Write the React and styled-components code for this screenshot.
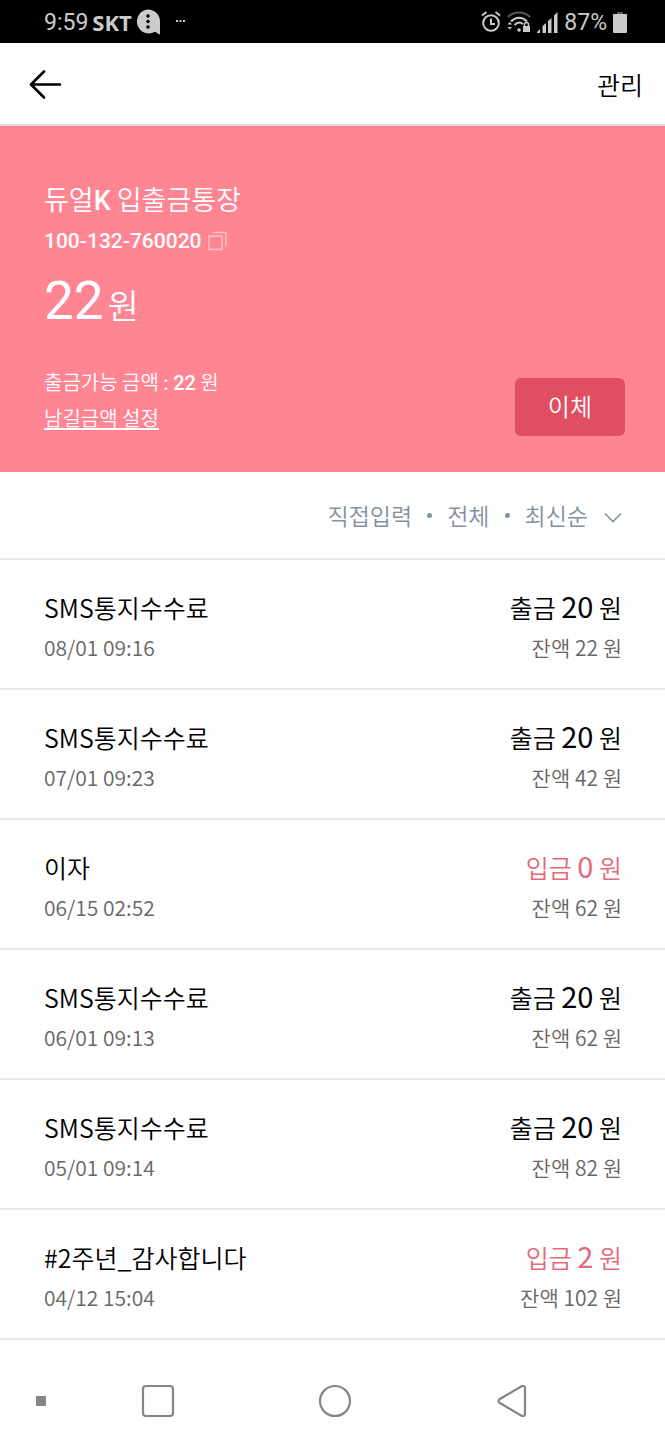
import styled, { createGlobalStyle } from "styled-components";

const GlobalStyle = createGlobalStyle`
    * {
        box-sizing: border-box;
    }
    body {
        margin: 0;
        background: #fefefe;
        color: #000;
        font-family: "Noto Sans CJK KR", "Noto Sans", sans-serif;
        font-weight: 350;
    }
    button {
        padding: 0;
        border: 0;
        background: none;
        color: inherit;
        font: inherit;
        cursor: pointer;
    }
    svg {
        display: block;
        flex-shrink: 0;
    }
`;

const Screen = styled.div`
    display: flex;
    flex-direction: column;
    min-height: 100vh;
`;

const StatusBar = styled.div`
    display: flex;
    align-items: center;
    justify-content: space-between;
    padding: 6px 38px 5px 44px;
    background: #000;
    color: #cbcbcb;
    font-family: Roboto, sans-serif;
    font-size: 23px;
    font-weight: 400;
    line-height: 32px;
`;

const StatusGroup = styled.div`
    display: flex;
    align-items: center;
    gap: ${({ $gap }) => $gap}px;
`;

const StatusText = styled.span`
    padding-top: 2px;
    line-height: 30px;
`;

const Carrier = styled.span`
    font-family: "Open Sans", sans-serif;
    font-size: 22px;
    font-weight: 700;
    line-height: 30px;
`;

const Header = styled.header`
    display: flex;
    align-items: center;
    justify-content: space-between;
    padding: 22px 22px 21px 28px;
    border-bottom: 2px solid #e4dcde;
`;

const HeaderButton = styled.button`
    font-size: 25px;
    line-height: 38px;
`;

const Account = styled.section`
    display: flex;
    align-items: flex-end;
    justify-content: space-between;
    padding: 53px 40px 36px 44px;
    background: #ff8593;
    color: #fff;
`;

const AccountName = styled.h1`
    margin: 0;
    font-size: 27px;
    font-weight: inherit;
    line-height: 40px;
`;

const Latin = styled.span`
    font-family: Roboto, sans-serif;
    font-weight: 500;
    line-height: 1;
`;

const AccountNumber = styled.div`
    display: flex;
    align-items: center;
    gap: 6px;
    font-family: Roboto, sans-serif;
    font-size: 21px;
    font-weight: 500;
    line-height: 44px;
`;

const Total = styled.p`
    margin: 6px 0 23px;
    font-size: 34px;
    line-height: 72px;
`;

const TotalNumber = styled.span`
    margin-right: 4px;
    font-family: Roboto, sans-serif;
    font-size: 53px;
    font-weight: 400;
    line-height: 1;
`;

const Available = styled.p`
    margin: 0;
    font-size: 20px;
    line-height: 36px;
`;

const TextLink = styled.a`
    display: block;
    color: inherit;
    font-size: 20px;
    line-height: 36px;
    text-underline-offset: 2px;
`;

const TransferButton = styled.button`
    padding: 9px 33px 11px;
    border-radius: 6px;
    background: #df4e61;
    font-size: 24px;
    line-height: 38px;
`;

const FilterBar = styled.div`
    display: flex;
    justify-content: flex-end;
    padding: 24px 43px 24px 44px;
    border-bottom: 2px solid #e8e8e8;
`;

const FilterButton = styled.button`
    display: flex;
    align-items: center;
    color: #8491a0;
    font-size: 23px;
    line-height: 38px;
`;

const Dot = styled.i`
    width: 5px;
    height: 5px;
    margin: 0 15px;
    border-radius: 50%;
    background: currentColor;
`;

const List = styled.ul`
    margin: 0;
    padding: 0;
    list-style: none;
`;

const Row = styled.li`
    display: flex;
    justify-content: space-between;
    padding: 26px 43px 22px 44px;
    border-bottom: 2px solid #e8e8e8;
`;

const Side = styled.div`
    text-align: ${({ $end }) => ($end ? "right" : "left")};
`;

const Main = styled.div`
    color: ${({ $deposit }) => ($deposit ? "#e5687b" : "#000")};
    font-size: 25px;
    line-height: 42px;
`;

const Amount = styled.span`
    font-size: 29px;
    font-weight: 400;
    line-height: 1;
`;

const Sub = styled.div`
    color: #666;
    font-size: 21px;
    line-height: 38px;
`;

const NavBar = styled.nav`
    display: grid;
    flex: 1;
    grid-template-columns: 70px repeat(3, 1fr);
    align-items: center;
    padding: 22px 65px 0 0;
`;

const NavButton = styled.button`
    display: flex;
    align-items: center;
    justify-content: center;
    padding: 8px;
    color: #858585;
`;

const NavHandle = styled.i`
    width: 10px;
    height: 10px;
    margin-left: 36px;
    border-radius: 1px;
    background: #858585;
`;

const IconGap = styled.span`
    display: flex;
    margin-left: ${({ $left }) => $left}px;
    margin-top: ${({ $top = 0 }) => $top}px;
`;

const transactions = [
    { title: "SMS통지수수료", date: "08/01 09:16", amount: 20, balance: 22 },
    { title: "SMS통지수수료", date: "07/01 09:23", amount: 20, balance: 42 },
    { title: "이자", date: "06/15 02:52", amount: 0, balance: 62, deposit: true },
    { title: "SMS통지수수료", date: "06/01 09:13", amount: 20, balance: 62 },
    { title: "SMS통지수수료", date: "05/01 09:14", amount: 20, balance: 82 },
    { title: "#2주년_감사합니다", date: "04/12 15:04", amount: 2, balance: 102, deposit: true },
];

function MessageIcon() {
    return (
        <svg width="24" height="26" viewBox="0 0 24 26">
            <path d="M12 0.500a12 12 0 1 0 7 22.300l5 3V12.500A12 12 0 0 0 12 .5z" fill="#cbcbcb" />
            <circle cx="12" cy="7" r="1.800" />
            <circle cx="12" cy="12.500" r="1.800" />
            <circle cx="12" cy="18" r="1.800" />
        </svg>
    );
}

function MoreIcon() {
    return (
        <svg width="9" height="4" viewBox="0 0 9 4" fill="#cbcbcb">
            <path d="M0 0h2v2H0zM3.500 0h2v2h-2zM7 0h2v2H7z" />
        </svg>
    );
}

function AlarmIcon() {
    return (
        <svg width="20" height="22" viewBox="0 0 20 22" fill="none" stroke="#cbcbcb" strokeWidth="2">
            <circle cx="10" cy="12" r="7.800" />
            <path d="M10 7.500V13h4M1 4.500 5.500 1M19 4.500 14.500 1" />
        </svg>
    );
}

function WifiIcon() {
    return (
        <svg width="24" height="22" viewBox="0 0 24 22" fill="none" stroke="#cbcbcb" strokeWidth="2">
            <path d="M1 6c6-6 16-6 22 0" stroke="#5a5a5a" />
            <path d="M4 10.500c5-5 11-5 16 0M7.500 14c3-3 6-3 8.500-1" />
            <path d="M.5 13.500 2.800 11l2.300 2.500zM.5 16l2.300 2.500L5.100 16z" fill="#cbcbcb" stroke="none" />
            <circle cx="12" cy="19" r="1.800" fill="#cbcbcb" stroke="none" />
            <path d="M16 15h7v6h-7z" fill="#cbcbcb" stroke="none" />
            <path d="M17.500 15v-1.500a2 2 0 0 1 4 0V15" strokeWidth="1.500" />
        </svg>
    );
}

function SignalIcon() {
    return (
        <svg width="21" height="21" viewBox="0 0 21 21" fill="#cbcbcb">
            <path d="M0 21v-1l3-3v4zM5.500 21v-7l3.500-3v10zM11 21V9l3.500-3v15zM17 21V3.500L20.500 0v21z" />
        </svg>
    );
}

function BatteryIcon() {
    return (
        <svg width="14" height="21" viewBox="0 0 14 21" fill="#cbcbcb">
            <path d="M4 0h6v2H4z" fill="#5a5a5a" />
            <path d="M0 2h14v18a1 1 0 0 1-1 1H1a1 1 0 0 1-1-1z" />
        </svg>
    );
}

function BackIcon() {
    return (
        <svg width="34" height="30" viewBox="0 0 34 30" fill="none" stroke="#000" strokeWidth="2.600" strokeLinecap="round">
            <path d="M3 15.500h29M16 2.500l-13 13 13 13" strokeLinejoin="round" />
        </svg>
    );
}

function CopyIcon() {
    return (
        <svg width="19" height="20" viewBox="0 0 19 20" fill="none" stroke="#ffc0c8" strokeWidth="1.500">
            <path d="M1 5h13v13.500H1zM4.500 1.500H18V15" />
        </svg>
    );
}

function ChevronIcon() {
    return (
        <svg width="18" height="11" viewBox="0 0 18 11" fill="none" stroke="#8491a0" strokeWidth="1.600">
            <path d="m1 1.500 8 8 8-8" />
        </svg>
    );
}

function NavIcon({ children }) {
    return (
        <svg width="34" height="34" viewBox="0 0 34 34" fill="none" stroke="currentColor" strokeWidth="2.200" strokeLinejoin="round">
            {children}
        </svg>
    );
}

export default function App() {
    return (
        <Screen>
            <GlobalStyle />
            <StatusBar>
                <StatusGroup $gap={4}>
                    <StatusText>9:59</StatusText>
                    <Carrier>SKT</Carrier>
                    <MessageIcon />
                    <IconGap $left={12}>
                        <MoreIcon />
                    </IconGap>
                </StatusGroup>
                <StatusGroup $gap={6}>
                    <AlarmIcon />
                    <WifiIcon />
                    <SignalIcon />
                    <StatusText>87%</StatusText>
                    <BatteryIcon />
                </StatusGroup>
            </StatusBar>

            <Header>
                <HeaderButton aria-label="뒤로">
                    <BackIcon />
                </HeaderButton>
                <HeaderButton>관리</HeaderButton>
            </Header>

            <Account>
                <div>
                    <AccountName>
                        듀얼<Latin>K</Latin> 입출금통장
                    </AccountName>
                    <AccountNumber>
                        100-132-760020
                        <button aria-label="계좌번호 복사">
                            <CopyIcon />
                        </button>
                    </AccountNumber>
                    <Total>
                        <TotalNumber>22</TotalNumber>원
                    </Total>
                    <Available>
                        출금가능 금액 : <Latin>22</Latin> 원
                    </Available>
                    <TextLink href="#limit">남길금액 설정</TextLink>
                </div>
                <TransferButton>이체</TransferButton>
            </Account>

            <FilterBar>
                <FilterButton>
                    직접입력
                    <Dot />
                    전체
                    <Dot />
                    최신순
                    <IconGap $left={16} $top={4}>
                        <ChevronIcon />
                    </IconGap>
                </FilterButton>
            </FilterBar>

            <List>
                {transactions.map(({ title, date, amount, balance, deposit }) => (
                    <Row key={date}>
                        <Side>
                            <Main>{title}</Main>
                            <Sub>{date}</Sub>
                        </Side>
                        <Side $end>
                            <Main $deposit={deposit}>
                                {deposit ? "입금" : "출금"} <Amount>{amount}</Amount> 원
                            </Main>
                            <Sub>잔액 {balance} 원</Sub>
                        </Side>
                    </Row>
                ))}
            </List>

            <NavBar>
                <NavHandle />
                <NavButton aria-label="최근 앱">
                    <NavIcon>
                        <rect x="2" y="2" width="30" height="30" rx="3" />
                    </NavIcon>
                </NavButton>
                <NavButton aria-label="홈">
                    <NavIcon>
                        <circle cx="17" cy="17" r="15" />
                    </NavIcon>
                </NavButton>
                <NavButton aria-label="이전">
                    <NavIcon>
                        <path d="M26.500 2.200 4.500 15.200q-2 1.800 0 3.600l22 13q3.500 1 3.500-2.300v-25q0-3.300-3.500-2.300z" />
                    </NavIcon>
                </NavButton>
            </NavBar>
        </Screen>
    );
}
